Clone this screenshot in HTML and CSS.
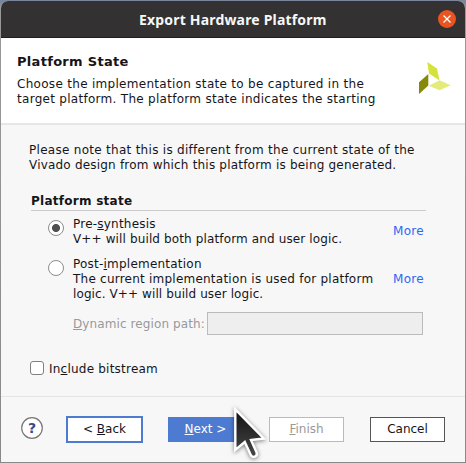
FILE: index.html
```html
<!DOCTYPE html>
<html lang="en">
<head>
<meta charset="utf-8">
<title>Export Hardware Platform</title>
<link rel="stylesheet" href="styles.css">
</head>
<body>
<main class="dialog">
  <header class="titlebar">
    <h1 class="title">Export Hardware Platform</h1>
    <svg class="close" viewBox="0 0 18 18"><circle cx="9" cy="9" r="9" fill="#e95420"/><path d="M5.500 5.500l7 7M12.500 5.500l-7 7" stroke="#fff" stroke-width="1.300"/></svg>
  </header>
  <section class="intro">
    <div>
      <h2 class="heading"><span class="t">Platform State</span></h2>
      <p><span class="t l1">Choose the implementation state to be captured in the</span><br><span class="t l2">target platform. The platform state indicates the starting</span></p>
    </div>
    <svg class="logo" viewBox="0 0 32 32"><path d="M8.300 0l9.700 6.500 2.500 12L10 11.500z" fill="#d5e23b"/><path d="M0 20.300L9.300 12v11.500L0 32z" fill="#868908"/><path d="M9.700 23.700L20.700 18.300l11 5-11 5z" fill="#e3eb7b"/></svg>
  </section>
  <section class="content">
    <p class="note"><span class="t l3">Please note that this is different from the current state of the</span><br><span class="t l4">Vivado design from which this platform is being generated.</span></p>
    <h3 class="group-title"><span class="t">Platform state</span></h3>
    <div class="option">
      <span class="radio checked"></span>
      <p class="label"><span class="t l5">Pre-<u>s</u>ynthesis</span><br><span class="t l6">V++ will build both platform and user logic.</span></p>
      <a class="more">More</a>
    </div>
    <div class="option second">
      <span class="radio"></span>
      <p class="label"><span class="t l7">Post-<u>i</u>mplementation</span><br><span class="t l8">The current implementation is used for platform</span><br><span class="t l9">logic. V++ will build user logic.</span></p>
      <a class="more">More</a>
    </div>
    <div class="path"><label><span class="t l10"><u>D</u>ynamic region path:</span></label><span class="field"></span></div>
    <div class="check"><span class="box"></span><span class="t l11">In<u>c</u>lude bitstream</span></div>
  </section>
  <footer class="footer">
    <svg class="help" viewBox="0 0 22 22"><circle cx="11" cy="11" r="10.300" fill="#fff" stroke="#777" stroke-width="1.200"/><text x="11" y="16" text-anchor="middle">?</text></svg>
    <span class="btn back"><span class="t">&lt; <u>B</u>ack</span></span>
    <span class="btn next"><span class="t"><u>N</u>ext &gt;</span></span>
    <span class="btn finish"><span class="t"><u>F</u>inish</span></span>
    <span class="btn"><span class="t">Cancel</span></span>
  </footer>
</main>
<svg class="cursor" viewBox="0 0 40 59"><defs><linearGradient id="g" x2="0" y2="1"><stop offset="0" stop-color="#111"/><stop offset="1" stop-color="#484848"/></linearGradient></defs><path d="M4.300 5.300v40.700l9.500-8L19.500 50.500c1.800 4.500 7.700 2 6-2.300L20 36l12.800-1.500z" fill="url(#g)" stroke="#fff" stroke-width="2.400"/></svg>
</body>
</html>
```
FILE: styles.css
```css
* { box-sizing: border-box; }
body { margin: 0; width: 466px; height: 463px; padding: 1px; overflow: hidden; background: linear-gradient(#7b869c 0, #7b869c 2px, #999 8px, #888 100%); font: 12px/15px "DejaVu Sans", sans-serif; color: #15151a; }
p, h1, h2, h3 { margin: 0; }
.t { white-space: nowrap; }
.l1 { letter-spacing: .3px; }
.l2, .l3 { letter-spacing: .285px; }
.l4 { letter-spacing: .2px; }
.l5, .l7, .l11 { letter-spacing: .22px; }
.l6 { letter-spacing: .13px; }
.l8 { letter-spacing: .23px; }
.l9, .l10 { letter-spacing: .1px; }
u { text-decoration-thickness: 1px; text-underline-offset: 1px; text-decoration-skip-ink: none; }
.dialog { display: flex; flex-direction: column; height: 461px; background: #f7f7f7; border-radius: 7px 7px 0 0; overflow: hidden; }
.titlebar { display: flex; align-items: center; height: 37px; padding: 0 9px 0 138px; background: #333132; border-bottom: 1px solid #1f1d1e; color: #f7f7f7; }
.title { flex: 1; padding-top: 2px; font: bold 14px/20px "Noto Sans", sans-serif; letter-spacing: .18px; white-space: nowrap; }
.close { width: 18px; height: 18px; }
.intro { display: flex; justify-content: space-between; height: 87px; padding: 15px 14px 0 16px; background: #fff; border-bottom: 2px solid #e6e6e6; }
.heading { padding-top: 1px; font-size: 13px; line-height: 16px; margin-bottom: 7px; letter-spacing: .3px; }
.logo { width: 32px; height: 32px; margin-top: 9px; }
.content { height: 271px; padding: 18px 39px 0 28px; }
.note { height: 51px; }
.group-title { font-size: 12px; height: 17px; margin: 0 0 0 2px; border-bottom: 1px solid #ccc; letter-spacing: .26px; }
.option { display: flex; padding: 6px 0 0 19px; height: 46px; }
.radio { flex: none; width: 16px; height: 16px; margin: 3px 9px 0 0; border: 1px solid #8c8c8c; border-radius: 50%; background: #fff; }
.checked { background: radial-gradient(circle, #505050 0 3.600px, #fff 4.400px); }
.label { flex: 1; }
.more { width: 33px; margin: 7px 0 0; color: #2b67f6; letter-spacing: .3px; }
.second { padding-top: 0; height: 55px; }
.second .radio { margin-top: 3px; }
.second .more { margin-top: 15px; }
.path { display: flex; align-items: center; height: 23px; padding-left: 44px; color: #999; }
.path label { width: 134px; padding-top: 2px; }
.field { width: 216px; height: 23px; border: 1px solid #bbb; background: #eee; }
.check { display: flex; align-items: center; gap: 5px; height: 15px; margin: 26px 0 0 1px; }
.check .t { padding-top: 1px; }
.box { width: 14px; height: 14px; margin-bottom: 1px; border: 1px solid #808080; border-radius: 3px; background: #fff; }
.footer { display: flex; align-items: center; height: 66px; border-top: 1px solid #e4e4e4; padding: 0 20px; }
.help { width: 22px; height: 22px; margin: 0 23px 3px 0; }
.help text { font: bold 14px "DejaVu Sans", sans-serif; fill: #314d86; }
.btn { display: flex; justify-content: center; align-items: center; width: 75px; height: 25px; border: 1px solid #555; background: #fff; }
.back { width: 77px; height: 27px; border: 2px solid #4d7bd1; margin-right: 25px; }
.next { border-color: #4d7bd1; background: #4d7bd1; color: #fff; margin-right: 26px; }
.finish { border-color: #bbb; color: #999; margin-right: 26px; }
.cursor { position: absolute; left: 231px; top: 404px; width: 40px; height: 59px; filter: drop-shadow(0 1px 2px rgba(0,0,0,.5)); }
```
